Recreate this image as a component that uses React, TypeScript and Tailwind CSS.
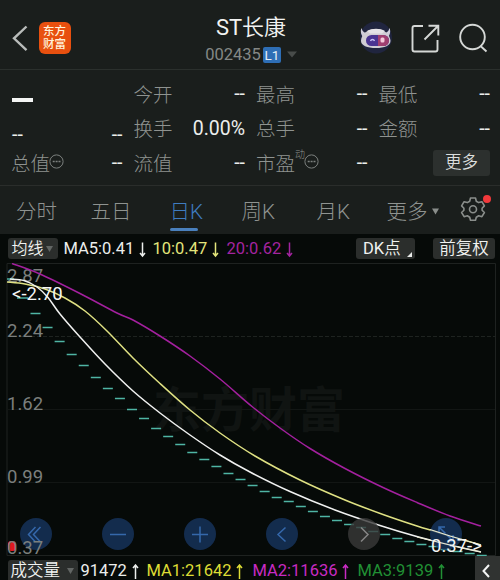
import type { ReactNode } from "react";

type Point = [number, number];

const MA5: Point[] = [
  [10, 279], [24, 280.5], [37, 287], [48, 297.5], [60, 314], [80, 337], [105, 364], [133, 391],
  [160, 413], [190, 435], [220, 455], [250, 472], [290, 491.5], [335, 510], [380, 525.5], [415, 536],
  [450, 545], [481, 552],
];
const MA10: Point[] = [
  [7, 282], [25, 284], [45, 289], [65, 298], [85, 311], [107, 331], [133, 358], [160, 383.5],
  [190, 410], [220, 433], [255, 456], [300, 480], [345, 500], [383, 514.5], [417, 526], [450, 536],
  [481, 545],
];
const MA20: Point[] = [
  [12, 263.5], [40, 274], [80, 293.5], [117, 313], [133, 320], [160, 336], [190, 356],
  [220, 379], [252, 406.5], [280, 428], [310, 448.5], [345, 468.5], [383, 487.5], [417, 502.5], [450, 516],
  [481, 526],
];

// one limit-down dash per trading day
const DASHES = [
  298, 313.5, 327.5, 341.5, 354.5, 365.5, 377.5, 388.5, 398.5, 409.5, 418.5, 428.5, 436.5, 444.5,
  452.5, 459.5, 466.5, 473.5, 479.5, 485.5, 491.5, 497.5, 501.5, 506.5, 511.5, 516.5, 520.5, 524.5,
  527.5, 531.5, 534.5, 538.5, 541.5, 544.5, 546.5, 549.5, 551.5, 553.5, 555.5,
];

function smooth(pts: Point[]) {
  let d = `M${pts[0][0]} ${pts[0][1]}`;
  for (let i = 0; i < pts.length - 1; i++) {
    const p0 = pts[i - 1] ?? pts[i];
    const p1 = pts[i];
    const p2 = pts[i + 1];
    const p3 = pts[i + 2] ?? p2;
    d += `C${p1[0] + (p2[0] - p0[0]) / 6} ${p1[1] + (p2[1] - p0[1]) / 6} ${p2[0] - (p3[0] - p1[0]) / 6} ${p2[1] - (p3[1] - p1[1]) / 6} ${p2[0]} ${p2[1]}`;
  }
  return d;
}

function Header() {
  return (
    <header className="flex h-[70px] items-start border-b border-[#2b302d] pl-3">
      <svg width="17" height="28" viewBox="0 0 17 28" className="mt-6" fill="none" stroke="#b9bcba" strokeWidth="2.4">
        <path d="M14.5 2.5 2 14.3l12.5 11.8" />
      </svg>
      <div className="mt-[22px] ml-[9.5px] flex h-8 w-8 flex-col items-center justify-center rounded-[6px] bg-[#e8500f] text-[11.5px] leading-[13px] font-medium text-[#fff3dc]">
        <span>东方</span>
        <span>财富</span>
      </div>
      <div className="ml-[103px] flex w-[155px] shrink-0 flex-col items-center">
        <h1 className="mt-[14px] text-[22px] leading-7 whitespace-nowrap text-[#f2f3f2]">
          ST<span className="font-[350]">长康</span>
        </h1>
        <div className="flex items-center text-[16.5px] leading-[25px] text-[#848886]">
          <span>002435</span>
          <span className="ml-[2px] flex h-4 w-[18px] items-center justify-center rounded-[2px] bg-[#2e6eb5] text-[13.5px] leading-4 text-[#e6eef7]">L1</span>
          <svg width="10" height="7" viewBox="0 0 10 7" className="ml-1.5"><path d="M0 .5h10L5 6.5z" fill="#484c4a" /></svg>
        </div>
      </div>
      <svg width="36" height="36" viewBox="0 0 36 36" className="mt-5 ml-[29px] shrink-0">
        <circle cx="18" cy="17.5" r="16" fill="#20253f" />
        <path d="M3.5 8c1 4 3 5 6.5 5l-4 5C3 15.5 2 11 3.5 8zM31.5 8c-1 4-3 5-6.5 5l4 5c3-2.5 4-6.5 2.5-10z" fill="#cfcdda" />
        <path d="M18 9c9 0 14 6 14.500 11.5.4 5-6 7.5-14.500 7.5S2.5 25.500 3 20.5C3.5 14.5 9 9 18 9z" fill="#d0cdd4" />
        <path d="M9 11c5-3 13-3 18 0l-3 2.5H12z" fill="#e4e2e6" />
        <rect x="8" y="15" width="23" height="11" rx="5.5" fill="#4a3492" />
        <path d="M20 15h5.5a5.5 5.5 0 0 1 0 11H20z" fill="#a03f70" />
        <path d="M12.5 21c.8-2 3.2-2 4 0" fill="none" stroke="#c7c0f5" strokeWidth="1.4" />
        <rect x="22.5" y="17.5" width="4" height="5" rx="1.5" fill="#f3c8da" />
      </svg>
      <svg width="30" height="30" viewBox="0 0 30 30" className="mt-[23px] ml-[16px] shrink-0" fill="none" stroke="#d5d8d6" strokeWidth="1.9">
        <path d="M13 3H4.5Q2.5 3 2.5 5v21.5q0 2 2 2h21q2 0 2-2V17M14.5 16.5 28 3M18.5 2.8h9.8v9.7" />
      </svg>
      <svg width="30" height="30" viewBox="0 0 30 30" className="mt-[23px] ml-[18px] shrink-0" fill="none" stroke="#d5d8d6" strokeWidth="1.9">
        <circle cx="14.5" cy="14" r="12.3" />
        <path d="m22.5 23 6 5.5" />
      </svg>
    </header>
  );
}

function Dots() {
  return (
    <svg width="15" height="15" viewBox="0 0 15 15" className="mb-1.5 -ml-px" fill="none" stroke="#7c807e">
      <circle cx="7.5" cy="7.5" r="6.6" />
      <path d="M3.7 7.5h2M6.6 7.5h2M9.5 7.5h2" strokeWidth="1.5" />
    </svg>
  );
}

function Cell({ label, value = "--", children }: { label?: string; value?: string; children?: ReactNode }) {
  return (
    <div className="flex h-[34.5px] items-center justify-between">
      <span className="-ml-px flex items-center pt-[3px] text-[19.5px] font-light text-[#8f9390]">
        {label}
        {children}
      </span>
      <span className="text-[19.5px] text-[#eceeec]">{value}</span>
    </div>
  );
}

function Quote() {
  return (
    <section className="grid h-[116px] grid-cols-4 content-start gap-x-3 border-b border-[#2a2d2b] pt-[6.5px] pr-2.5 pl-3">
      <div className="flex h-[34.5px] items-center pt-3">
        <span className="h-1 w-[21px] bg-[#f4f5f4]" />
      </div>
      <Cell label="今开" />
      <Cell label="最高" />
      <Cell label="最低" />
      <div className="flex h-[34.5px] items-center justify-between pt-3 text-[19.5px] text-[#eceeec]">
        <span>--</span>
        <span>--</span>
      </div>
      <Cell label="换手" value="0.00%" />
      <Cell label="总手" />
      <Cell label="金额" />
      <Cell label="总值"><Dots /></Cell>
      <Cell label="流值" />
      <Cell label="市盈">
        <span className="mb-[18px] text-[10px] leading-3">动</span>
        <Dots />
      </Cell>
      <div className="flex h-[34.5px] items-center justify-end">
        <button className="h-[26px] w-[57px] rounded-[3px] bg-[#2c302e] text-[16.5px] leading-[26px] font-[350] text-[#dcdedd]">更多</button>
      </div>
    </section>
  );
}

function Tabs() {
  return (
    <nav className="flex h-12 items-center pt-0.5 pl-4 text-[20.5px] font-light text-[#8f9390]">
      <span className="w-[74.5px] pt-0.5">分时</span>
      <span className="w-[79px] pt-0.5">五日</span>
      <span className="flex w-[72px] flex-col pt-1 text-[#3f7cc0]">
        <span className="pt-px leading-[32px]">日K</span>
        <span className="h-[3px] w-7 rounded-full bg-[#4a80bd]" />
      </span>
      <span className="w-[75px] pt-0.5">周K</span>
      <span className="w-[70px] pt-0.5">月K</span>
      <span className="flex w-[73px] items-center pt-0.5">
        更多
        <svg width="7" height="7" viewBox="0 0 7 7" className="mb-0.5 ml-1"><path d="M0 .5h7l-3.500 6z" fill="#8a8e8b" /></svg>
      </span>
      <span className="relative -mt-1">
        <svg width="26" height="26" viewBox="0 0 26 26" fill="none" stroke="#8a8e8b" strokeWidth="1.6" strokeLinejoin="round">
          <path d="M10.500 2h5l.8 3.200 2.400 1.400 3.200-.9 2.500 4.200-2.300 2.300v2l2.300 2.300-2.500 4.200-3.200-.9-2.400 1.400-.8 3h-5l-.8-3-2.400-1.400-3.200.9-2.500-4.200 2.300-2.300v-2L1.600 9.900l2.500-4.200 3.200.9 2.400-1.400z" />
          <circle cx="13" cy="13.2" r="3.5" />
        </svg>
        <i className="absolute -top-px left-[23px] h-2 w-2 rounded-full bg-[#f2393b]" />
      </span>
    </nav>
  );
}

function Arrow({ up }: { up?: boolean }) {
  return (
    <svg width="7" height="16" viewBox="0 0 7 16" className="ml-[5px] shrink-0" fill="none" stroke="currentColor" strokeWidth="1.5">
      {up ? <path d="M3.500 15V1.500M1 4l2.500-3L6 4" /> : <path d="M3.500.5v13M1 11l2.500 3L6 11" />}
    </svg>
  );
}

function MaBar() {
  return (
    <div className="flex h-[29px] items-center pr-[5px] pl-[7.5px] text-[16.5px] whitespace-nowrap">
      <button className="flex h-[21px] w-[50px] items-center rounded-[3px] bg-[#2b2e2c] pl-1 text-[16px] leading-5 font-[350] text-[#f1f3f1]">
        均线
        <svg width="7" height="6" viewBox="0 0 7 6" className="ml-0.5"><path d="M0 0h7L3.500 6z" fill="#626664" /></svg>
      </button>
      <span className="ml-1.5 flex w-[89px] items-center pt-0.5 text-[#eceeec]">MA5:0.41<Arrow /></span>
      <span className="flex w-[74px] items-center pt-0.5 text-[#e3e57b]">10:0.47<Arrow /></span>
      <span className="flex items-center pt-0.5 text-[#a3249f]">20:0.62<Arrow /></span>
      <button className="mr-[18px] ml-auto flex h-[21px] w-[59px] items-center rounded-[3px] bg-[#2b2e2c] pl-[7px] text-[16.5px] leading-5 text-[#f1f3f1]">
        DK<span className="font-[350]">点</span>
        <svg width="5" height="5" viewBox="0 0 5 5" className="mt-3 ml-1.5"><path d="M5 0v5H0z" fill="#e9ebe9" /></svg>
      </button>
      <button className="h-[21px] w-[62px] rounded-[3px] bg-[#2b2e2c] text-[16.5px] leading-[22px] font-[350] text-[#f1f3f1]">前复权</button>
    </div>
  );
}

const BUTTONS = [
  "M15.500 9 8.500 16.500l7 7.500M20.500 9l-7 7.500 7 7.500",
  "M8 16.500h16",
  "M8 16.500h16M16 8.500v16",
  "M19.500 9.500 12 16.500l7.500 7",
  "M13 9.500l7 7-7 7",
  "M15.500 15.500 9 9M9 15V9h6M17 17l6 6M23 17v6h-6",
];

function Chart() {
  return (
    <div className="relative h-[293px]">
      <svg width="500" height="293" viewBox="0 263 500 293" className="block" fill="none">
        <text x="249" y="427" textAnchor="middle" fontSize="48" fontWeight="700" fill="#101412">东方财富</text>
        <path d="M7 263.5h488.5V555.5H7z" stroke="#1e2220" />
        <path d="M7 336.5h488" stroke="#1e2320" strokeDasharray="4 2" />
        <path d="M7 409.5h488M7 482.5h488" stroke="#121614" />
        <g fontSize="18.5" fill="#7b7f7d">
          <text x="7" y="281.5">2.87</text>
          <text x="7" y="336.5">2.24</text>
          <text x="7" y="410">1.62</text>
          <text x="7" y="483">0.99</text>
        </g>
        <path d="M7 279h7M17 298h11" stroke="#48ad9f" strokeWidth="1.5" />
        {DASHES.slice(1).map((y, i) => (
          <path key={i} d={`M${30.5 + i * 12.06} ${y}h10`} stroke="#4fb5a4" strokeWidth="1.5" />
        ))}
        <path d={smooth(MA20)} stroke="#a3209e" strokeWidth="1.5" />
        <path d={smooth(MA10)} stroke="#dfe183" strokeWidth="1.5" />
        <path d={smooth(MA5)} stroke="#f0f1f0" strokeWidth="1.5" />
        <text x="12" y="300" fontSize="18.5" fill="#f4f5f4">&lt;-2.70</text>
      </svg>
      <div className="absolute top-[255px] left-[19.5px] flex gap-[50.2px]">
        {BUTTONS.map((d, i) => (
          <svg key={i} width="32" height="32" viewBox="0 0 32 32" fill="none">
            <circle cx="16" cy="16" r="16" fill={i === 4 ? "#393939" : "#17345f"} fillOpacity=".8" />
            <path d={d} stroke={i === 4 ? "#858585" : "#3568ab"} strokeWidth="1.5" />
          </svg>
        ))}
      </div>
      <svg width="500" height="44" viewBox="0 512 500 44" className="absolute bottom-0 left-0 overflow-visible" fill="none">
        <rect x="8" y="541" width="8" height="10" rx="3" fill="#e0191f" />
        <text x="7" y="554" fontSize="18.5" fill="#7b7f7d">0.37</text>
        <path d="m430 529.500 20 6.500 31 9M417 537l33 8 31 7" stroke="#ecebd0" strokeWidth="1.2" />
        <text x="431" y="552" fontSize="18.5" fill="#f4f5f4">0.37-&gt;</text>
      </svg>
    </div>
  );
}

function VolumeBar() {
  return (
    <div className="flex h-6 items-center pl-[7.5px] text-[16.5px] whitespace-nowrap">
      <button className="mt-1 flex h-5 w-[70px] items-center rounded-t-[3px] bg-[#2b2e2c] pt-0.5 pl-[3px] text-[16.5px] leading-5 font-[350] text-[#f1f3f1]">
        成交量
        <svg width="7" height="6" viewBox="0 0 7 6" className="ml-[7px]"><path d="M0 0h7L3.500 6z" fill="#626664" /></svg>
      </button>
      <div className="mt-[7px] flex items-center">
        <span className="ml-[3px] flex w-[66px] items-center text-[#eceeec]">91472<Arrow up /></span>
        <span className="flex w-[106px] items-center text-[#dddc35]">MA1:21642<Arrow up /></span>
        <span className="flex w-[105px] items-center text-[#c82bc3]">MA2:11636<Arrow up /></span>
        <span className="flex items-center text-[#219034]">MA3:9139<Arrow up /></span>
      </div>
      <button className="ml-auto flex h-6 w-[25px] items-center justify-center bg-[#303331]">
        <svg width="8" height="14" viewBox="0 0 8 14" className="mt-1.5 mr-1" fill="none" stroke="#f4f5f4" strokeWidth="2"><path d="M7 1 1.500 7 7 13" /></svg>
      </button>
    </div>
  );
}

export default function App() {
  return (
    <main className="h-[580px] w-[500px] overflow-hidden bg-[#1a1e1c] font-['Roboto','Noto_Sans_CJK_SC',sans-serif]">
      <Header />
      <Quote />
      <Tabs />
      <div className="bg-[#060a08]">
        <MaBar />
        <Chart />
        <VolumeBar />
      </div>
    </main>
  );
}
